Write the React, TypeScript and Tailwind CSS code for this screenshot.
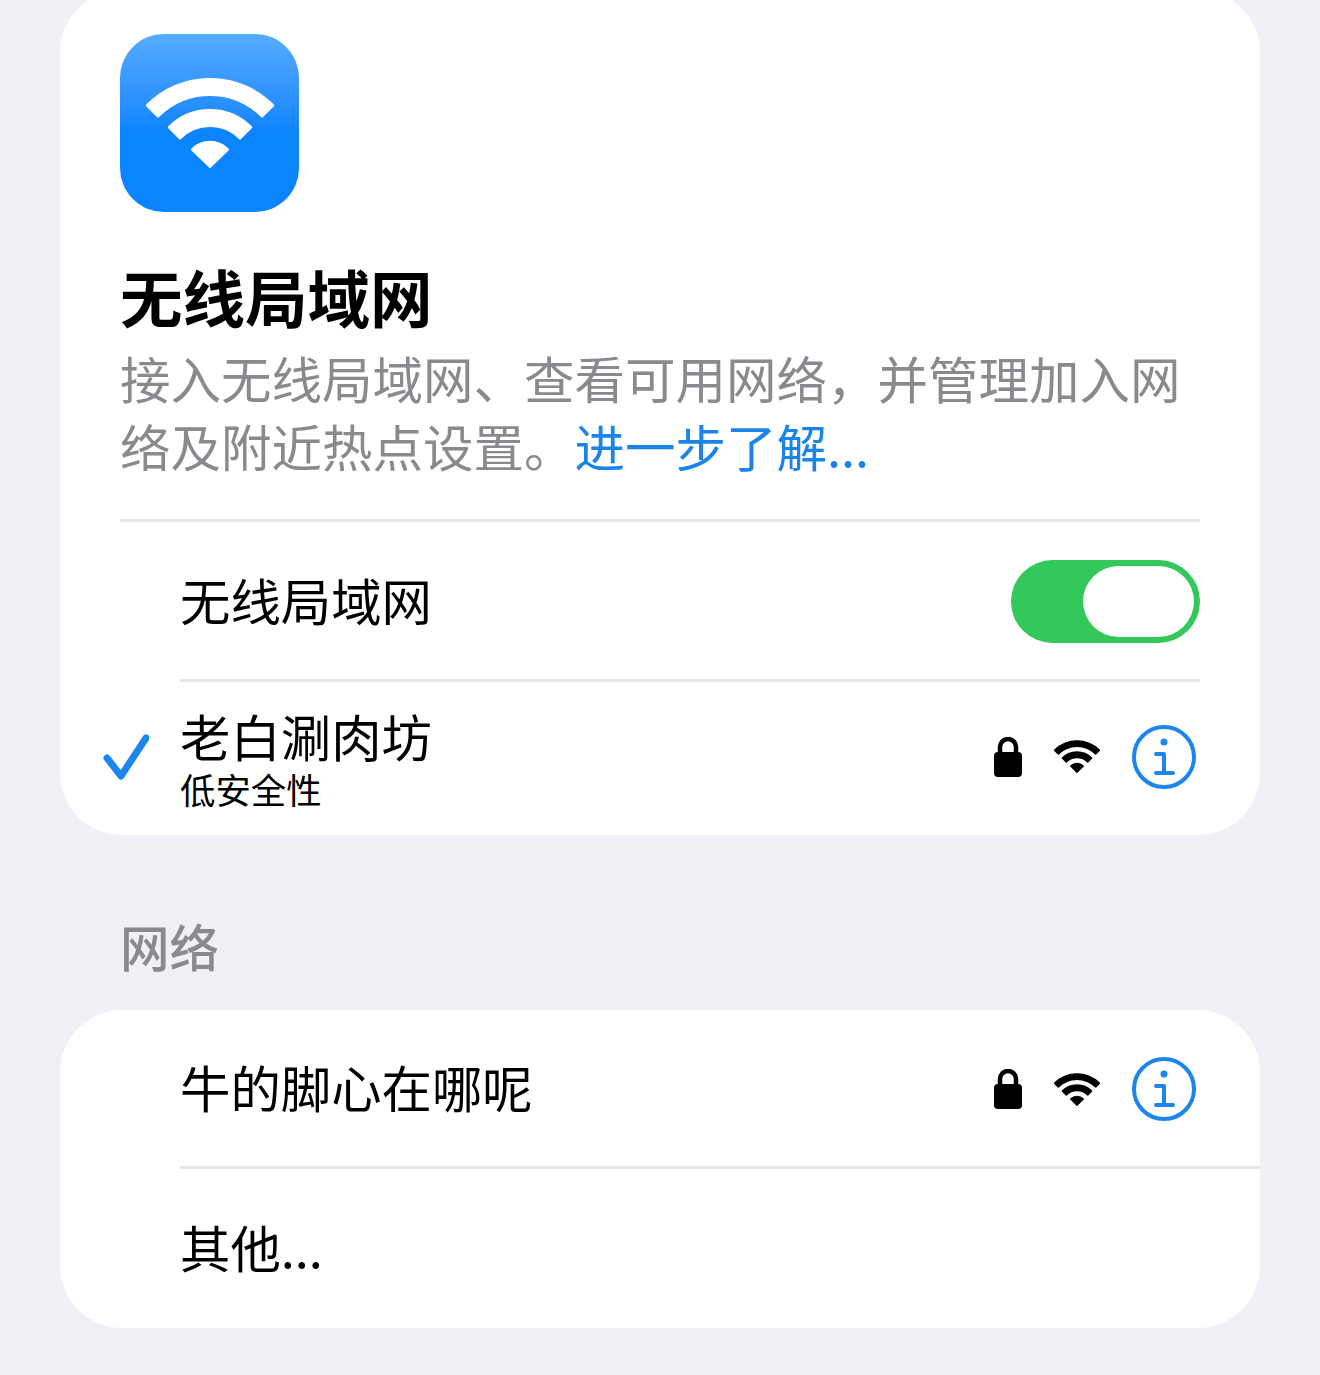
const FONT = "font-['Noto_Sans_CJK_SC','Noto_Sans',sans-serif]";

// Three-band wifi mark, shared by the app tile and the network rows
function WifiGlyph({ color, join, className }: { color: string; join: number; className: string }) {
  return (
    <svg viewBox="25 44 128 90" className={className} fill={color} stroke={color} strokeWidth={join} strokeLinejoin="round">
      <path d="M26.4 71.4 A88.5 88.5 0 0 1 151.6 71.4 L141 82 A73.5 73.5 0 0 0 37 82 Z" />
      <path d="M48.3 93.3 A57.5 57.5 0 0 1 129.7 93.3 L119 104 A42.5 42.5 0 0 0 59 104 Z" />
      <path d="M71.5 115.5 A25 25 0 0 1 106.5 115.5 L89 132.5 Z" />
    </svg>
  );
}

function AppIcon() {
  return (
    <div className="flex h-[178px] w-[179px] justify-center rounded-[44px] bg-gradient-to-b from-[#55abff] via-[#0a84ff] via-55% to-[#0a84ff] pt-[44px]">
      <WifiGlyph color="#fff" join={3} className="h-[90px] w-[128px]" />
    </div>
  );
}

function LockIcon() {
  return (
    <svg viewBox="0 0 28 40" className="h-[40px] w-[28px]" fill="none">
      <path d="M6 19 V10 A8 8 0 0 1 22 10 V19" stroke="#000" strokeWidth="4.5" />
      <rect x="0" y="15" width="28" height="25" rx="4" fill="#000" />
    </svg>
  );
}

function InfoIcon() {
  return (
    <svg viewBox="0 0 64 64" className="h-[64px] w-[64px]" fill="none" stroke="#1c86ee">
      <circle cx="32" cy="32" r="30" strokeWidth="4" />
      <circle cx="32" cy="17" r="3.5" fill="#1c86ee" stroke="none" />
      <path d="M24 29 H32 V48 M24 48 H41" strokeWidth="4" strokeLinecap="round" strokeLinejoin="round" />
    </svg>
  );
}

function NetworkStatus({ className }: { className: string }) {
  return (
    <div className={`flex items-center gap-[32px] ${className}`}>
      <LockIcon />
      <WifiGlyph color="#000" join={4} className="h-[33px] w-[46px]" />
      <InfoIcon />
    </div>
  );
}

export default function App() {
  return (
    <div className={`min-h-[1375px] bg-[#f0f0f6] px-[60px] pb-[47px] ${FONT}`}>
      <section className="-mt-[10px] h-[845px] overflow-hidden rounded-[62px] bg-white pt-[44px]">
        <div className="px-[60px]">
          <AppIcon />
          <h1 className="mt-[46px] text-[62.5px] leading-[76px] font-bold text-black">无线局域网</h1>
          <p className="mt-[9px] text-[50.5px] leading-[68px] text-[#8a8a8e]">
            接入无线局域网、查看可用网络，并管理加入网络及附近热点设置。
            <span className="text-[#1a84e8]">进一步了解...</span>
          </p>
          <div className="mt-[40px] h-[3px] bg-[#e6e6e8]" />
        </div>

        <div className="flex h-[157px] items-center justify-between pr-[60px] pl-[120px]">
          <span className="pb-[1px] text-[50.4px] leading-none text-black">无线局域网</span>
          <div className="mt-[2px] flex h-[83px] w-[189px] items-center justify-end rounded-full bg-[#34c759] pr-[6px]">
            <div className="h-[71px] w-[111px] rounded-full bg-white" />
          </div>
        </div>
        <div className="mr-[60px] ml-[120px] h-[3px] bg-[#e6e6e8]" />

        <div className="flex h-[155px] items-center pr-[64px] pl-[43px]">
          <svg viewBox="0 0 46 46" className="mb-[5px] h-[46px] w-[46px] shrink-0" fill="none">
            <path d="M4 24 L18 42 L43 4" stroke="#1c86ee" strokeWidth="7" strokeLinecap="round" strokeLinejoin="round" />
          </svg>
          <div className="ml-[31px] flex-1 pb-[6px] text-black">
            <div className="text-[50.4px] leading-[64px]">老白涮肉坊</div>
            <div className="text-[35.4px] leading-[42px]">低安全性</div>
          </div>
          <NetworkStatus className="pb-[6px]" />
        </div>
      </section>

      <h2 className="mt-[81px] px-[60px] text-[49.5px] leading-[60px] font-medium text-[#8a8a8e]">网络</h2>

      <section className="mt-[34px] overflow-hidden rounded-[62px] bg-white">
        <div className="flex h-[156px] items-center justify-between pr-[64px] pl-[120px]">
          <span className="pb-[1px] text-[50.4px] leading-none text-black">牛的脚心在哪呢</span>
          <NetworkStatus className="pt-[2px]" />
        </div>
        <div className="ml-[120px] h-[3px] bg-[#e6e6e8]" />
        <div className="flex h-[159px] items-center pl-[120px]">
          <span className="pb-[2px] text-[50.4px] leading-none text-black">其他...</span>
        </div>
      </section>
    </div>
  );
}
